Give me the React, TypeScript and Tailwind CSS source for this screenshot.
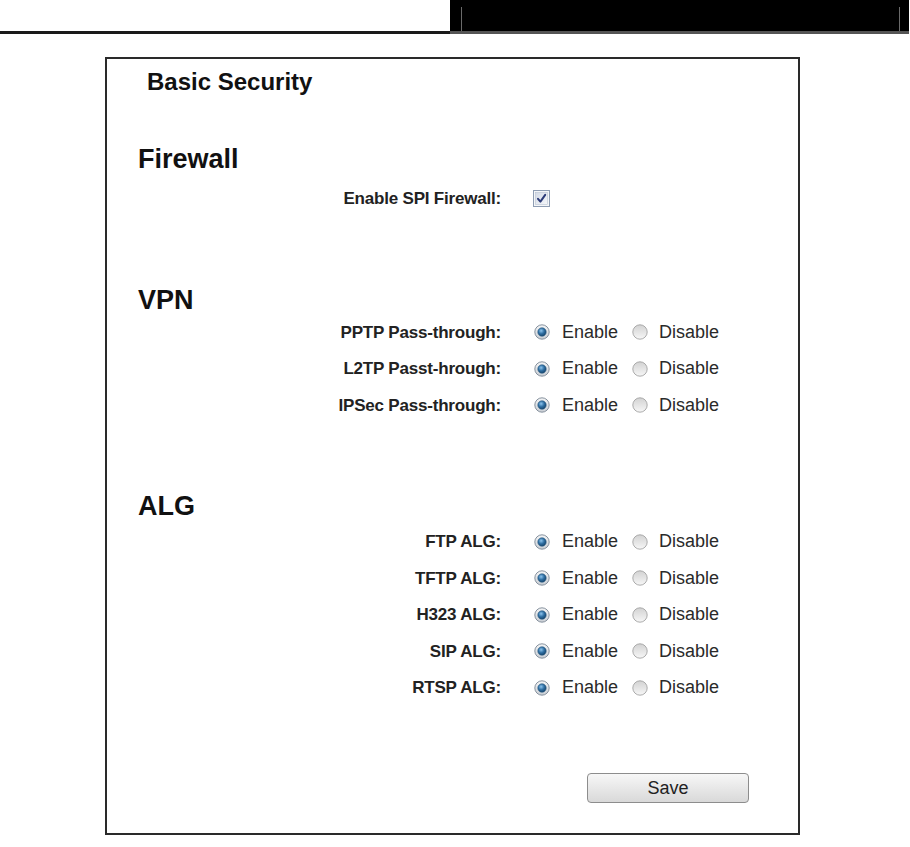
import React from 'react';

const font = "font-['Liberation_Sans',Arial,sans-serif]";

function RadioOn() {
  return (
    <svg width="16" height="16" viewBox="0 0 16 16" className="shrink-0">
      <defs>
        <linearGradient id="ringOn" x1="0" y1="0" x2="0" y2="1">
          <stop offset="0" stopColor="#f4f5f6" />
          <stop offset="1" stopColor="#c9ced4" />
        </linearGradient>
        <radialGradient id="dotOn" cx="0.4" cy="0.35" r="0.65">
          <stop offset="0" stopColor="#8cc3ec" />
          <stop offset="0.55" stopColor="#2f6fa3" />
          <stop offset="1" stopColor="#17466e" />
        </radialGradient>
      </defs>
      <circle cx="8" cy="8" r="7.2" fill="url(#ringOn)" stroke="#7b8794" strokeWidth="0.9" />
      <circle cx="8" cy="8" r="4.2" fill="url(#dotOn)" stroke="#24557e" strokeWidth="0.6" />
    </svg>
  );
}

function RadioOff() {
  return (
    <svg width="16" height="16" viewBox="0 0 16 16" className="shrink-0">
      <defs>
        <linearGradient id="ringOff" x1="0" y1="0" x2="0" y2="1">
          <stop offset="0" stopColor="#d2d2d2" />
          <stop offset="1" stopColor="#f7f7f7" />
        </linearGradient>
      </defs>
      <circle cx="8" cy="8" r="7.2" fill="url(#ringOff)" stroke="#a3a3a3" strokeWidth="0.9" />
    </svg>
  );
}

function CheckBox() {
  return (
    <svg width="17" height="17" viewBox="0 0 17 17" className="shrink-0">
      <defs>
        <linearGradient id="cbFill" x1="0" y1="0" x2="1" y2="1">
          <stop offset="0" stopColor="#d3dae6" />
          <stop offset="1" stopColor="#f5f7fa" />
        </linearGradient>
      </defs>
      <rect x="0.5" y="0.5" width="16" height="16" fill="#f4f6f8" stroke="#8e9db3" />
      <rect x="2.5" y="2.5" width="12" height="12" fill="url(#cbFill)" stroke="#b9c3d2" strokeWidth="0.6" />
      <path d="M5 8.8 L7.4 11.6 L12.2 4.9" fill="none" stroke="#2c3b78" strokeWidth="2" strokeLinecap="round" strokeLinejoin="round" />
    </svg>
  );
}

function OptionRow({ label }: { label: string }) {
  return (
    <div className="flex h-[36.5px] items-center">
      <div className="w-[394px] text-right text-[17px] font-bold text-[#222] tracking-[-0.2px]">{label}</div>
      <div className="ml-[33px] flex items-center text-[18px] text-[#2a2a2a]">
        <RadioOn />
        <span className="ml-[12px]">Enable</span>
        <span className="ml-[14px]"><RadioOff /></span>
        <span className="ml-[11px]">Disable</span>
      </div>
    </div>
  );
}

function Heading({ children, className }: { children: React.ReactNode; className: string }) {
  return (
    <h2 className={`pl-[31px] text-[27px] leading-[27px] font-bold text-[#111] ${className}`}>{children}</h2>
  );
}

export default function App() {
  const vpn = ['PPTP Pass-through:', 'L2TP Passt-hrough:', 'IPSec Pass-through:'];
  const alg = ['FTP ALG:', 'TFTP ALG:', 'H323 ALG:', 'SIP ALG:', 'RTSP ALG:'];

  return (
    <div className={`w-[910px] h-[847px] bg-white ${font}`}>
      {/* page header strip */}
      <div className="flex h-[34px]">
        <div className="flex w-[450px] flex-col justify-end">
          <div className="h-[3px] bg-[#1a1a1a]" />
        </div>
        <div className="flex w-[459px] flex-col">
          <div className="flex-1 bg-black pt-[7px] pl-[11px] pr-[9px]">
            <div className="h-full border-x border-[#6a6a6a]" />
          </div>
          <div className="h-[3px] bg-[#555]" />
        </div>
      </div>

      {/* settings panel */}
      <div className="ml-[105px] mt-[23px] h-[778px] w-[695px] border-2 border-[#2a2a2a] pt-[9px]">
        <h1 className="pl-[40px] text-[24px] leading-[28px] font-bold text-[#111]">Basic Security</h1>

        <Heading className="mt-[50px]">Firewall</Heading>
        <div className="mt-[8px] flex h-[36px] items-center">
          <div className="w-[394px] text-right text-[17px] font-bold text-[#222] tracking-[-0.2px]">Enable SPI Firewall:</div>
          <div className="ml-[32px] -mt-[2px]">
            <CheckBox />
          </div>
        </div>

        <Heading className="mt-[70px]">VPN</Heading>
        <div>
          {vpn.map((l) => (
            <OptionRow key={l} label={l} />
          ))}
        </div>

        <Heading className="mt-[69px]">ALG</Heading>
        <div className="mt-[4px]">
          {alg.map((l) => (
            <OptionRow key={l} label={l} />
          ))}
        </div>

        <div className="mt-[67px] pl-[480px]">
          <button className="h-[30px] w-[162px] rounded-[4px] border border-[#8d8d8d] bg-gradient-to-b from-[#f7f7f7] to-[#d9d9d9] text-[18px] text-[#222]">
            Save
          </button>
        </div>
      </div>
    </div>
  );
}
